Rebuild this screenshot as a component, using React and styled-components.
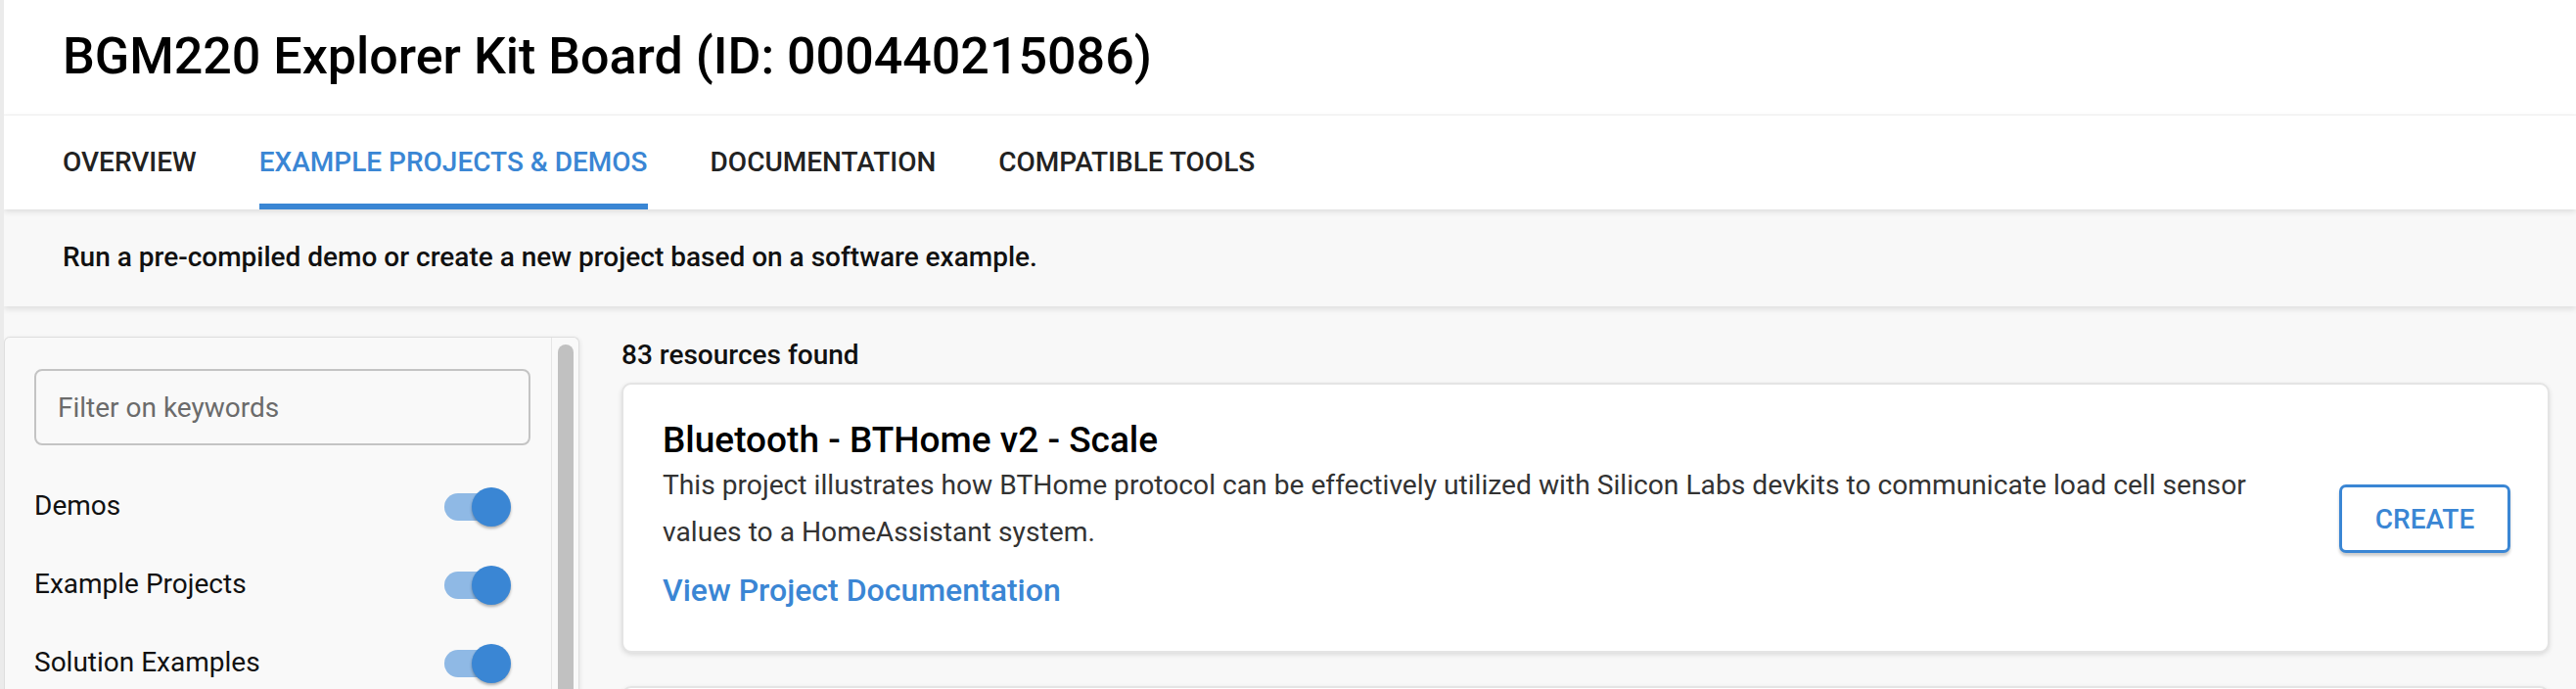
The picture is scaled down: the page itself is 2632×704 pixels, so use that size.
import React from "react";
import styled, { createGlobalStyle } from "styled-components";

const Global = createGlobalStyle`
  html, body { margin: 0; padding: 0; }
  body { font-family: Roboto, "Noto Sans", "Liberation Sans", sans-serif; background: #f8f8f8; }
  * { box-sizing: border-box; }
`;

const BLUE = "#3a86d4";

const Page = styled.div`
  height: 100vh;
  overflow: hidden;
  border-left: 4px solid #ebebeb;
  background: #f8f8f8;
  display: flex;
  flex-direction: column;
`;

const Header = styled.header`
  background: #fff;
  padding: 28px 60px 29px;
  border-bottom: 1px solid #f4f4f4;
`;

const Title = styled.h1`
  margin: 0;
  font-size: 52px;
  line-height: 60px;
  font-weight: 500;
  color: #000;
`;

const TabBar = styled.nav`
  background: #fff;
  display: flex;
  gap: 64px;
  padding: 0 60px;
  height: 96px;
  box-shadow: 0 2px 6px rgba(0, 0, 0, 0.12);
  position: relative;
  z-index: 2;
`;

const Tab = styled.div`
  padding-top: 32px;
  font-size: 28px;
  line-height: 32px;
  font-weight: 500;
  color: ${(p) => (p.$active ? BLUE : "#222")};
  border-bottom: 6px solid ${(p) => (p.$active ? BLUE : "transparent")};
  white-space: nowrap;
`;

const Banner = styled.div`
  background: #f8f8f8;
  padding: 33px 60px 34px;
  font-size: 28px;
  line-height: 32px;
  font-weight: 500;
  color: #111;
  box-shadow: 0 3px 6px rgba(0, 0, 0, 0.1);
  position: relative;
  z-index: 1;
`;

const Body = styled.div`
  flex: 1;
  display: grid;
  grid-template-columns: 588px 1fr;
  column-gap: 43px;
  padding: 31px 27px 0 0;
  min-height: 0;
`;

const Sidebar = styled.aside`
  display: flex;
  background: #f9f9f9;
  border: 1px solid #dedede;
  border-bottom: none;
  border-radius: 6px 6px 0 0;
  box-shadow: 1px 1px 4px rgba(0, 0, 0, 0.08);
`;

const SidebarContent = styled.div`
  flex: 1;
  padding: 32px 21px 0 30px;
`;

const SearchInput = styled.input`
  width: 100%;
  height: 78px;
  border: 2px solid #c4c4c4;
  border-radius: 8px;
  background: #f9f9f9;
  padding: 0 22px;
  font-family: inherit;
  font-size: 28px;
  color: #333;
  outline: none;
  &::placeholder { color: #6b6b6b; }
`;

const FilterList = styled.div`
  margin-top: 21px;
  display: flex;
  flex-direction: column;
`;

const FilterRow = styled.label`
  height: 80px;
  display: flex;
  align-items: center;
  justify-content: space-between;
  padding-right: 22px;
  font-size: 28px;
  color: #111;
`;

const SwitchTrack = styled.span`
  position: relative;
  width: 66px;
  height: 28px;
  border-radius: 14px;
  background: #8fb9e5;
  margin-top: 4px;
`;

const SwitchThumb = styled.span`
  position: absolute;
  top: -6px;
  right: -2px;
  width: 40px;
  height: 40px;
  border-radius: 50%;
  background: ${BLUE};
  box-shadow: 0 2px 3px rgba(0, 0, 0, 0.3);
`;

const ScrollTrack = styled.div`
  width: 28px;
  border-left: 1px solid #e6e6e6;
  padding: 7px 6px 0 6px;
`;

const ScrollThumb = styled.div`
  width: 16px;
  height: 100%;
  border-radius: 8px 8px 0 0;
  background: #c1c1c1;
`;

const Main = styled.main`
  display: flex;
  flex-direction: column;
  min-width: 0;
`;

const Count = styled.div`
  margin-top: 4px;
  margin-bottom: 13px;
  font-size: 28px;
  line-height: 30px;
  font-weight: 500;
  color: #111;
`;

const Card = styled.article`
  display: flex;
  align-items: center;
  gap: 60px;
  background: #fff;
  border: 2px solid #e4e4e4;
  border-radius: 10px;
  padding: 35px 38px 42px 40px;
  box-shadow: 0 2px 5px rgba(0, 0, 0, 0.12);
  margin-bottom: 34px;
`;

const CardText = styled.div`
  flex: 1;
  min-width: 0;
`;

const CardTitle = styled.h2`
  margin: 0;
  font-size: 37px;
  line-height: 44px;
  font-weight: 500;
  color: #000;
`;

const CardDesc = styled.p`
  margin: 0;
  font-size: 28.2px;
  line-height: 48px;
  color: #333;
`;

const DocLink = styled.a`
  display: block;
  margin-top: 15px;
  font-size: 32px;
  line-height: 40px;
  font-weight: 500;
  color: ${BLUE};
  text-decoration: none;
`;

const CreateButton = styled.button`
  flex: none;
  width: 175px;
  height: 70px;
  margin-top: 9px;
  background: #fff;
  border: 3px solid ${BLUE};
  border-radius: 7px;
  color: ${BLUE};
  font-family: inherit;
  font-size: 28px;
  font-weight: 500;
  box-shadow: 0 3px 3px rgba(0, 0, 0, 0.2);
`;

const filters = ["Demos", "Example Projects", "Solution Examples"];
const tabs = ["OVERVIEW", "EXAMPLE PROJECTS & DEMOS", "DOCUMENTATION", "COMPATIBLE TOOLS"];

const cards = [
  {
    title: "Bluetooth - BTHome v2 - Scale",
    desc:
      "This project illustrates how BTHome protocol can be effectively utilized with Silicon Labs devkits to communicate load cell sensor values to a HomeAssistant system.",
  },
  {
    title: "Bluetooth - BTHome v2 - Internal Temperature Monitor",
    desc:
      "This project illustrates how BTHome protocol can be effectively utilized with Silicon Labs devkits to communicate temperature values to a HomeAssistant system.",
  },
];

export default function App() {
  return (
    <>
      <Global />
      <Page>
        <Header>
          <Title>BGM220 Explorer Kit Board (ID: 000440215086)</Title>
        </Header>
        <TabBar>
          {tabs.map((t, i) => (
            <Tab key={t} $active={i === 1}>
              {t}
            </Tab>
          ))}
        </TabBar>
        <Banner>Run a pre-compiled demo or create a new project based on a software example.</Banner>
        <Body>
          <Sidebar>
            <SidebarContent>
              <SearchInput placeholder="Filter on keywords" />
              <FilterList>
                {filters.map((f) => (
                  <FilterRow key={f}>
                    {f}
                    <SwitchTrack>
                      <SwitchThumb />
                    </SwitchTrack>
                  </FilterRow>
                ))}
              </FilterList>
            </SidebarContent>
            <ScrollTrack>
              <ScrollThumb />
            </ScrollTrack>
          </Sidebar>
          <Main>
            <Count>83 resources found</Count>
            {cards.map((c) => (
              <Card key={c.title}>
                <CardText>
                  <CardTitle>{c.title}</CardTitle>
                  <CardDesc>{c.desc}</CardDesc>
                  <DocLink href="#">View Project Documentation</DocLink>
                </CardText>
                <CreateButton>CREATE</CreateButton>
              </Card>
            ))}
          </Main>
        </Body>
      </Page>
    </>
  );
}
